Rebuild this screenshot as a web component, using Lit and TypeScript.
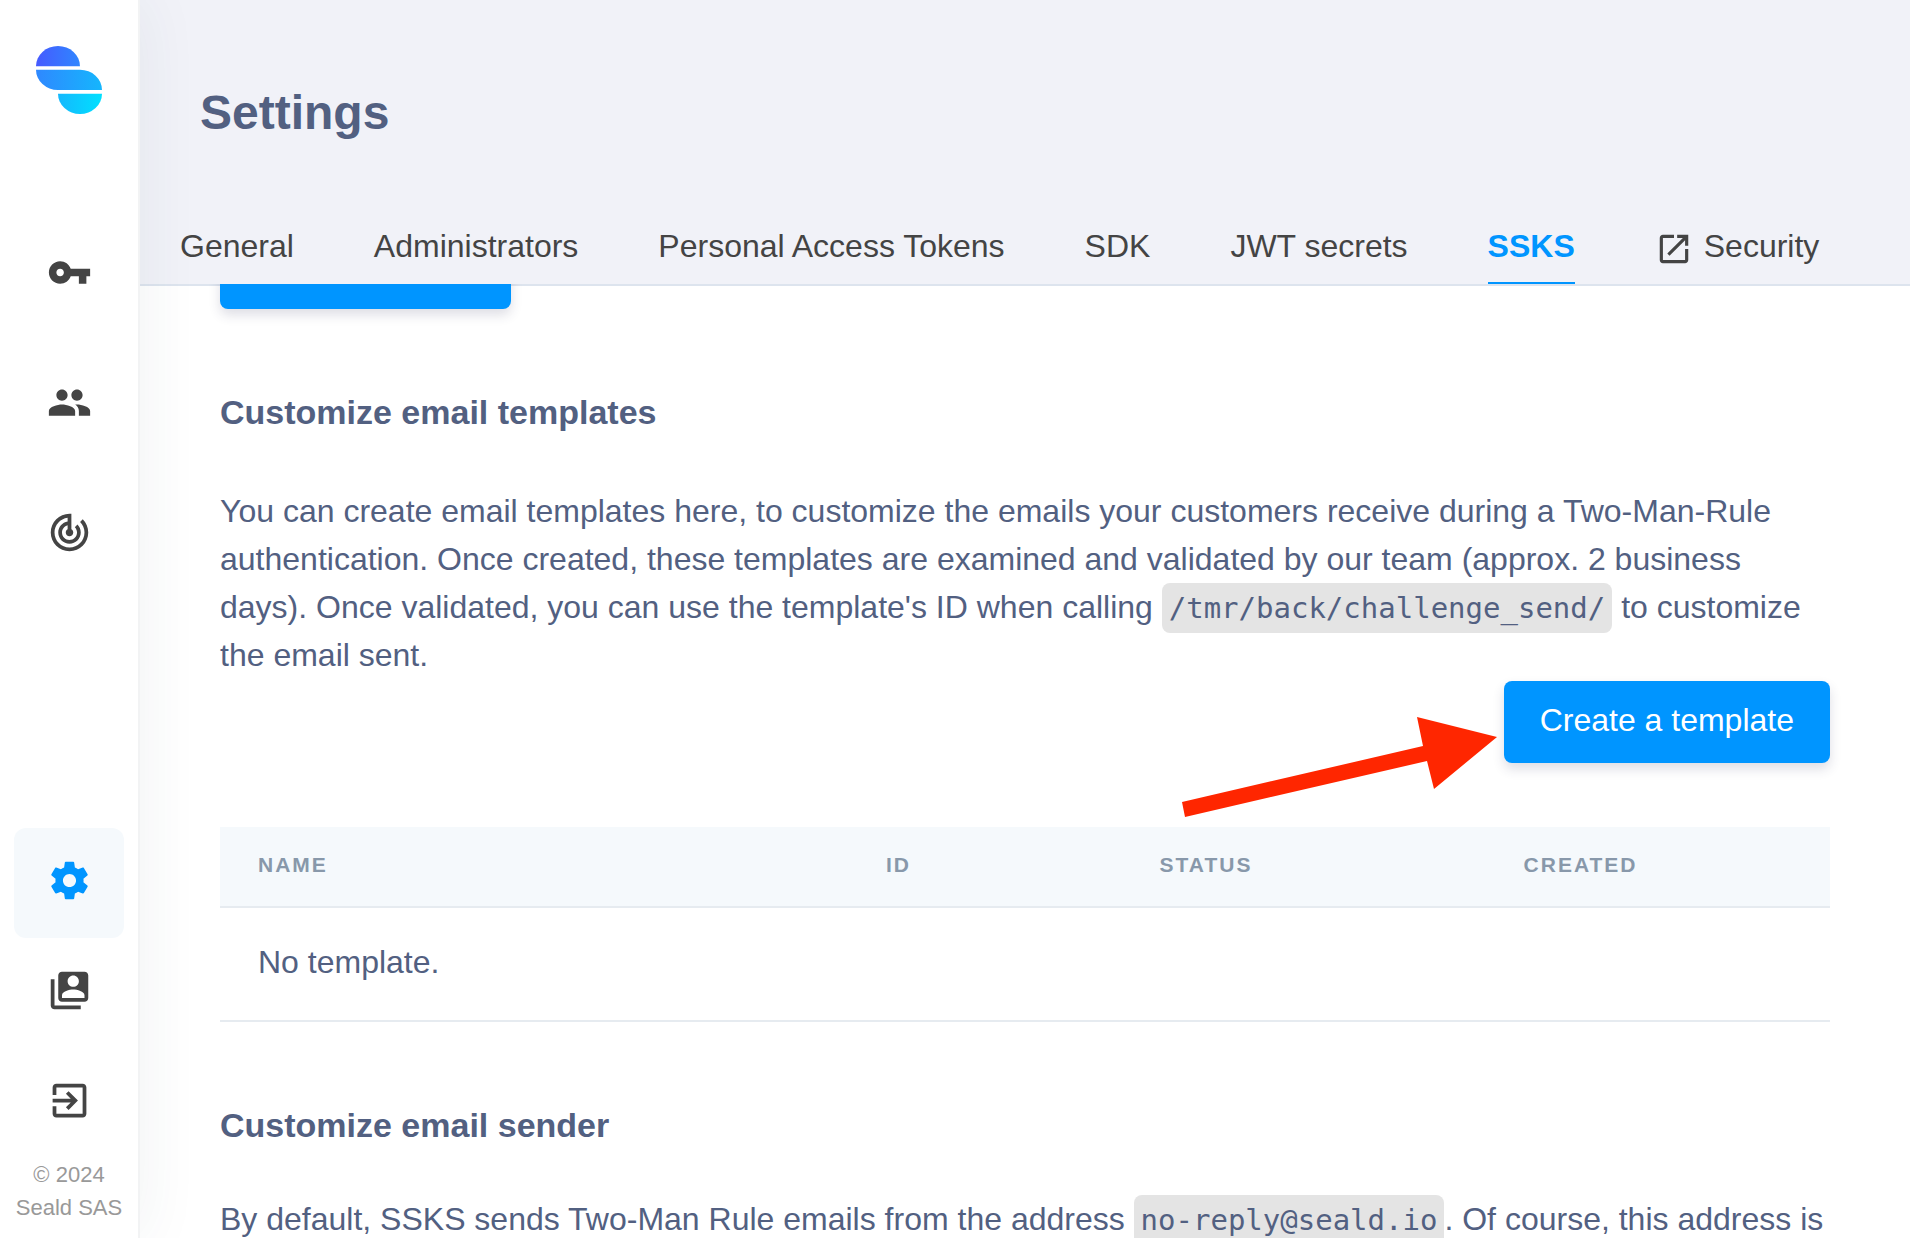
import { LitElement, html, css, svg } from "lit";
import { customElement, property } from "lit/decorators.js";
import { classMap } from "lit/directives/class-map.js";

const ICONS: Record<string, string> = {
  key: "M12.65 10C11.83 7.67 9.61 6 7 6c-3.31 0-6 2.69-6 6s2.69 6 6 6c2.61 0 4.83-1.67 5.65-4H17v4h4v-4h2v-4H12.65zM7 14c-1.1 0-2-.9-2-2s.9-2 2-2 2 .9 2 2-.9 2-2 2z",
  people:
    "M16 11c1.66 0 2.99-1.34 2.99-3S17.66 5 16 5c-1.66 0-3 1.34-3 3s1.34 3 3 3zm-8 0c1.66 0 2.99-1.34 2.99-3S9.66 5 8 5C6.34 5 5 6.34 5 8s1.34 3 3 3zm0 2c-2.33 0-7 1.17-7 3.5V19h14v-2.5c0-2.33-4.67-3.5-7-3.5zm8 0c-.29 0-.62.02-.97.05 1.16.84 1.97 1.97 1.97 3.45V19h6v-2.5c0-2.33-4.67-3.5-7-3.5z",
  activity:
    "M19.07 4.93l-1.41 1.41C19.1 7.79 20 9.79 20 12c0 4.42-3.58 8-8 8s-8-3.58-8-8c0-4.08 3.05-7.44 7-7.93v2.02C8.16 6.57 6 9.03 6 12c0 3.31 2.69 6 6 6s6-2.69 6-6c0-1.66-.67-3.16-1.76-4.24l-1.41 1.41C15.55 9.9 16 10.9 16 12c0 2.21-1.79 4-4 4s-4-1.79-4-4c0-1.86 1.28-3.41 3-3.86v2.14c-.6.35-1 .98-1 1.72 0 1.1.9 2 2 2s2-.9 2-2c0-.74-.4-1.38-1-1.72V2h-1C6.48 2 2 6.48 2 12s4.48 10 10 10 10-4.48 10-10c0-2.76-1.12-5.26-2.93-7.07z",
  settings:
    "M19.43 12.98c.04-.32.07-.64.07-.98s-.03-.66-.07-.98l2.11-1.65c.19-.15.24-.42.12-.64l-2-3.46c-.12-.22-.39-.3-.61-.22l-2.49 1c-.52-.4-1.08-.73-1.69-.98l-.38-2.65C14.46 2.18 14.25 2 14 2h-4c-.25 0-.46.18-.49.42l-.38 2.65c-.61.25-1.17.59-1.69.98l-2.49-1c-.23-.09-.49 0-.61.22l-2 3.46c-.13.22-.07.49.12.64l2.11 1.65c-.04.32-.07.65-.07.98s.03.66.07.98l-2.11 1.65c-.19.15-.24.42-.12.64l2 3.46c.12.22.39.3.61.22l2.49-1c.52.4 1.08.73 1.69.98l.38 2.65c.03.24.24.42.49.42h4c.25 0 .46-.18.49-.42l.38-2.65c.61-.25 1.17-.59 1.69-.98l2.49 1c.23.09.49 0 .61-.22l2-3.46c.12-.22.07-.49-.12-.64l-2.11-1.65zM12 15.5c-1.93 0-3.5-1.57-3.5-3.5s1.57-3.5 3.5-3.5 3.5 1.57 3.5 3.5-1.57 3.5-3.5 3.5z",
  account:
    "M4 6H2v14c0 1.1.9 2 2 2h14v-2H4V6zm16-4H8c-1.1 0-2 .9-2 2v12c0 1.1.9 2 2 2h12c1.1 0 2-.9 2-2V4c0-1.1-.9-2-2-2zm-6 2c1.66 0 3 1.34 3 3s-1.34 3-3 3-3-1.34-3-3 1.34-3 3-3zm6 12H8v-1.5c0-1.99 4-3 6-3s6 1.01 6 3V16z",
  logout:
    "M10.09 15.59L11.5 17l5-5-5-5-1.41 1.41L12.67 11H3v2h9.67l-2.58 2.59zM19 3H5c-1.11 0-2 .9-2 2v4h2V5h14v14H5v-4H3v4c0 1.1.89 2 2 2h14c1.1 0 2-.9 2-2V5c0-1.1-.9-2-2-2z",
  external:
    "M19 19H5V5h7V3H5c-1.11 0-2 .9-2 2v14c0 1.1.89 2 2 2h14c1.1 0 2-.9 2-2v-7h-2v7zM14 3v2h3.59l-9.83 9.83 1.41 1.41L19 6.41V10h2V3h-7z",
};

@customElement("app-icon")
export class AppIcon extends LitElement {
  static styles = css`
    :host {
      display: block;
      flex: none;
    }
    .glyph {
      display: block;
      width: 100%;
      height: 100%;
      fill: currentColor;
    }
  `;

  @property() name = "";

  render() {
    return html`<svg class="glyph" viewBox="0 0 24 24" aria-hidden="true">
      ${svg`<path d=${ICONS[this.name] ?? ""}></path>`}
    </svg>`;
  }
}

interface NavItem {
  icon: string;
  label: string;
  active?: boolean;
}

const MAIN_NAV: NavItem[] = [
  { icon: "key", label: "Identities" },
  { icon: "people", label: "Users" },
  { icon: "activity", label: "Activity" },
];

const FOOT_NAV: NavItem[] = [
  { icon: "settings", label: "Settings", active: true },
  { icon: "account", label: "Account" },
  { icon: "logout", label: "Log out" },
];

@customElement("side-bar")
export class SideBar extends LitElement {
  static styles = css`
    :host {
      display: flex;
      flex-direction: column;
      align-items: center;
      box-sizing: border-box;
      width: 140px;
      padding: 46px 14px 14px;
      background: #fff;
      border-right: 2px solid #f2f3f4;
      box-shadow: 0 0 64px rgba(40, 70, 90, 0.07);
    }
    .logo {
      display: block;
      width: 66px;
      height: 68px;
    }
    .main {
      display: flex;
      flex-direction: column;
      gap: 20px;
      margin-top: 106px;
    }
    .foot {
      display: flex;
      flex-direction: column;
      margin-top: auto;
    }
    .item {
      display: flex;
      align-items: center;
      justify-content: center;
      box-sizing: border-box;
      width: 110px;
      height: 110px;
      padding-bottom: 6px;
      border-radius: 12px;
      color: #444;
    }
    .item.active {
      background: #f5f9fc;
      color: #0095ff;
    }
    .icon {
      width: 45px;
      height: 45px;
    }
    .copyright {
      margin: 0;
      color: #999;
      font-size: 22px;
      line-height: 33px;
      text-align: center;
      white-space: nowrap;
    }
  `;

  private item(i: NavItem) {
    return html`<a
      class=${classMap({ item: true, active: !!i.active })}
      href="#"
      aria-label=${i.label}
      ><app-icon class="icon" name=${i.icon}></app-icon
    ></a>`;
  }

  render() {
    return html`
      <svg class="logo" viewBox="0 0 66 68" role="img" aria-label="Seald">
        <defs>
          <linearGradient id="top">
            <stop offset="0" stop-color="#465aff"></stop>
            <stop offset="1" stop-color="#2f86ff"></stop>
          </linearGradient>
          <linearGradient id="middle">
            <stop offset="0" stop-color="#2f88ff"></stop>
            <stop offset="1" stop-color="#15b6fd"></stop>
          </linearGradient>
          <linearGradient id="bottom">
            <stop offset="0" stop-color="#15b8fd"></stop>
            <stop offset="1" stop-color="#00e0ff"></stop>
          </linearGradient>
        </defs>
        <path fill="url(#top)" d="M0 20.300A22 20.300 0 0 1 44 20.300Z"></path>
        <path fill="url(#middle)" d="M0 23.700H44A22 20.300 0 0 1 66 44H22A22 20.300 0 0 1 0 23.700Z"></path>
        <path fill="url(#bottom)" d="M22 47.700H66A22 20.300 0 0 1 22 47.700Z"></path>
      </svg>
      <nav class="main" aria-label="Main">${MAIN_NAV.map((i) => this.item(i))}</nav>
      <nav class="foot" aria-label="Account">${FOOT_NAV.map((i) => this.item(i))}</nav>
      <p class="copyright">© 2024<br />Seald SAS</p>
    `;
  }
}

const TABS = [
  { label: "General" },
  { label: "Administrators" },
  { label: "Personal Access Tokens" },
  { label: "SDK" },
  { label: "JWT secrets" },
  { label: "SSKS", active: true },
  { label: "Security", icon: "external" },
] as { label: string; active?: boolean; icon?: string }[];

@customElement("page-header")
export class PageHeader extends LitElement {
  static styles = css`
    :host {
      display: block;
      background: #f1f2f8;
      border-bottom: 2px solid #dde4ee;
    }
    .title {
      margin: 0;
      padding: 77px 60px 62px;
      color: #526081;
      font-size: 48px;
      line-height: 72px;
    }
    .tabs {
      display: flex;
      gap: 80px;
      padding: 0 40px;
    }
    .tab {
      display: flex;
      align-items: center;
      gap: 11px;
      height: 69px;
      padding-bottom: 2px;
      border-bottom: 2px solid transparent;
      color: #444;
      line-height: 48px;
      text-decoration: none;
      white-space: nowrap;
    }
    .tab.active {
      border-color: #0095ff;
      color: #0095ff;
      font-weight: bold;
    }
    .icon {
      width: 38px;
      height: 38px;
      margin-top: 6px;
    }
  `;

  render() {
    return html`
      <h1 class="title">Settings</h1>
      <nav class="tabs" aria-label="Settings sections">
        ${TABS.map(
          (t) => html`<a class=${classMap({ tab: true, active: !!t.active })} href="#"
            >${t.icon ? html`<app-icon class="icon" name=${t.icon}></app-icon>` : null}${t.label}</a
          >`,
        )}
      </nav>
    `;
  }
}

@customElement("app-root")
export class AppRoot extends LitElement {
  static styles = css`
    :host {
      display: grid;
      grid-template-columns: auto minmax(0, 1fr);
      height: 100vh;
      overflow: hidden;
      background: #fff;
      color: #526081;
      font-family: "Liberation Sans", Arial, Helvetica, sans-serif;
      font-size: 32px;
      line-height: 48px;
    }
    .sidebar {
      z-index: 1;
    }
    .page {
      display: flex;
      flex-direction: column;
      min-height: 0;
    }
    /* The scrolled content slides over the header's bottom rule. */
    .content {
      flex: 1;
      min-height: 0;
      margin-top: -2px;
      padding: 0 80px;
      overflow: hidden;
    }
    .scrolled {
      margin-top: -57px;
    }
    .button {
      display: block;
      padding: 16px 36px 20px;
      border: 0;
      border-radius: 8px;
      background: #0095ff;
      box-shadow: 0 6px 12px rgba(50, 50, 93, 0.16);
      color: #fff;
      font: inherit;
      line-height: 46px;
    }
    .save {
      width: 291px;
      height: 82px;
    }
    .heading {
      margin: 0;
      font-size: 34px;
      line-height: 52px;
    }
    .first {
      padding: 77px 0 49px;
    }
    .second {
      padding: 77px 0 44px;
    }
    .text {
      margin: 0;
    }
    .code {
      padding: 8px 7px;
      border-radius: 8px;
      background: #e4e4e4;
      font-family: "DejaVu Sans Mono", Menlo, monospace;
      font-size: 29px;
      line-height: 32px;
    }
    .actions {
      display: flex;
      justify-content: flex-end;
      position: relative;
      margin: 2px 0 64px;
    }
    .pointer {
      position: absolute;
      right: 331px;
      top: 35px;
      width: 318px;
      height: 102px;
      fill: #ff2600;
    }
    .table {
      width: 100%;
      border-collapse: collapse;
      table-layout: fixed;
      text-align: left;
    }
    .head {
      box-sizing: border-box;
      padding: 22px 38px 25px;
      border-bottom: 2px solid #e6ebf0;
      background: #f5f9fc;
      color: #8898aa;
      font-size: 21px;
      line-height: 32px;
      letter-spacing: 2px;
    }
    .name {
      width: 39%;
    }
    .id {
      width: 17%;
    }
    .status {
      width: 364px;
    }
    .cell {
      padding: 30px 38px 34px;
      border-bottom: 2px solid #e6ebf0;
    }
  `;

  render() {
    return html`
      <side-bar class="sidebar"></side-bar>
      <main class="page">
        <page-header></page-header>
        <div class="content">
          <div class="scrolled">
            <button class="button save" type="button" aria-label="Save"></button>
            <h2 class="heading first">Customize email templates</h2>
            <p class="text">
              You can create email templates here, to customize the emails your customers receive
              during a Two-Man-Rule authentication. Once created, these templates are examined and
              validated by our team (approx. 2 business days). Once validated, you can use the
              template's ID when calling <code class="code">/tmr/back/challenge_send/</code> to
              customize the email sent.
            </p>
            <div class="actions">
              <svg class="pointer" viewBox="0 0 318 102" aria-hidden="true">
                <polygon points="316,21 236,1 242,30 1,86 4,101 246,45 253,73"></polygon>
              </svg>
              <button class="button" type="button">Create a template</button>
            </div>
            <table class="table">
              <thead>
                <tr>
                  <th class="head name" scope="col">NAME</th>
                  <th class="head id" scope="col">ID</th>
                  <th class="head status" scope="col">STATUS</th>
                  <th class="head" scope="col">CREATED</th>
                </tr>
              </thead>
              <tbody>
                <tr>
                  <td class="cell" colspan="4">No template.</td>
                </tr>
              </tbody>
            </table>
            <h2 class="heading second">Customize email sender</h2>
            <p class="text">
              By default, SSKS sends Two-Man Rule emails from the address
              <code class="code">no-reply@seald.io</code>. Of course, this address is
            </p>
          </div>
        </div>
      </main>
    `;
  }
}
